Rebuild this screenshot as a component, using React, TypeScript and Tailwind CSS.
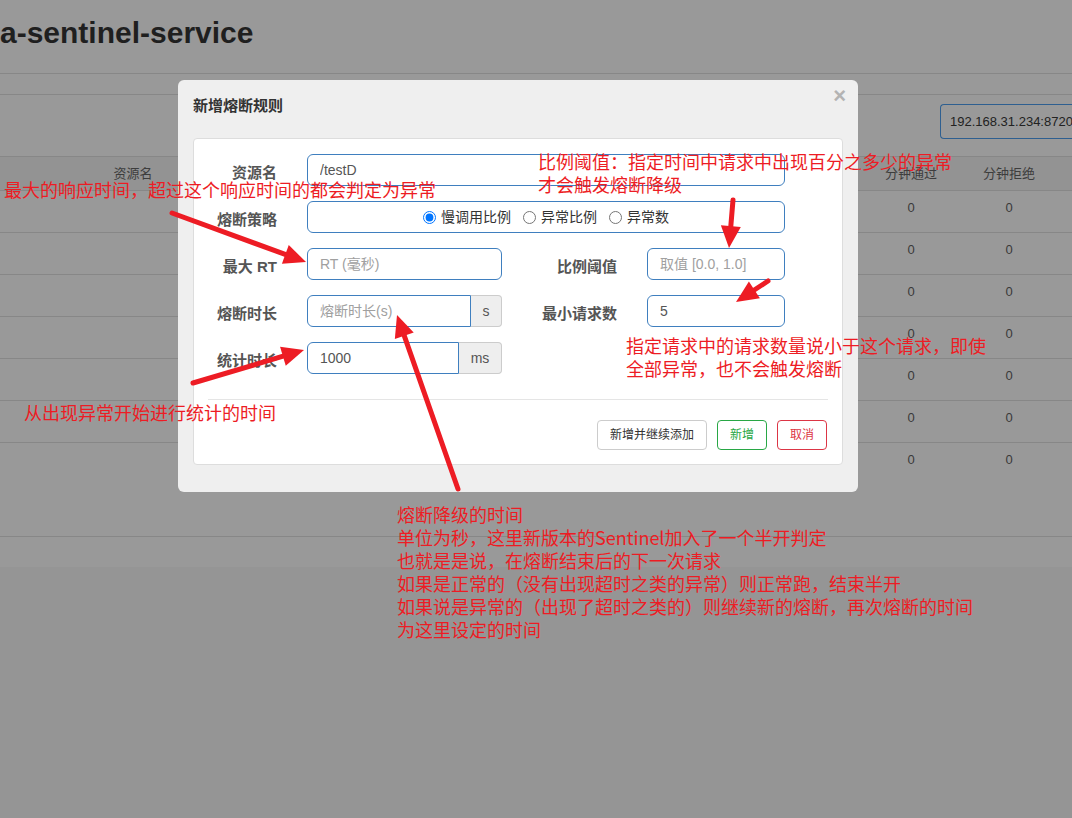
import React from "react";

const rows = [0, 1, 2, 3, 4, 5, 6];

interface IArrow {
    x1: number,
    y1: number,
    x2: number,
    y2: number,
}

// red arrow drawn on top of the screenshot
const Arrow = ({ x1, y1, x2, y2 }: IArrow) => {
    const dx = x2 - x1;
    const dy = y2 - y1;
    const len = Math.sqrt(dx * dx + dy * dy);
    const ux = dx / len;
    const uy = dy / len;
    const bx = x2 - ux * 22;
    const by = y2 - uy * 22;
    const px = -uy;
    const py = ux;
    const head = `${x2},${y2} ${bx + px * 10},${by + py * 10} ${bx - px * 10},${by - py * 10}`;
    return (
        <g>
            <line x1={x1} y1={y1} x2={bx + ux * 2} y2={by + uy * 2} stroke="#ed1c24" strokeWidth={5} strokeLinecap="round" />
            <polygon points={head} fill="#ed1c24" />
        </g>
    );
};

const Label = ({ text, w }: { text: string, w: string }) => (
    <div className={`${w} mt-[5px] shrink-0 text-right text-[15px] font-bold leading-[20px] text-[#555]`}>{text}</div>
);

const App = () => {
    return (
        <div className="relative h-[818px] w-full overflow-hidden bg-[#959595] font-['Liberation_Sans','Noto_Sans_CJK_SC',sans-serif]">
            {/* page behind the backdrop */}
            <div className="bg-[#999999]">
                <div className="h-[74px] border-b border-[#878787]">
                    <h1 className="pt-[15px] text-[30px] font-bold leading-[36px] text-[#1f1f1f]">a-sentinel-service</h1>
                </div>
                <div className="h-[21px] border-b border-[#878787]" />
                <div className="flex h-[62px] justify-end border-b border-[#878787] pt-[9px]">
                    <div className="flex h-[35px] w-[132px] shrink-0 items-center overflow-hidden whitespace-nowrap rounded-l-[4px] border border-r-0 border-[#2e5f90] pl-[9px] text-[13px] text-[#222]">
                        192.168.31.234:8720
                    </div>
                </div>
                <div className="flex h-[34px] items-center border-b border-[#878787] bg-[#939393] text-[13px] text-[#3d3d3d]">
                    <div className="w-[266px] text-center">资源名</div>
                    <div className="flex-1" />
                    <div className="w-[98px] text-center">分钟通过</div>
                    <div className="w-[98px] text-center">分钟拒绝</div>
                    <div className="w-[14px]" />
                </div>
                {rows.map((r) => (
                    <div key={r} className={`flex h-[42px] items-center pb-[8px] text-[13px] text-[#3a3a3a] ${r < 6 ? "border-b border-[#878787]" : ""}`}>
                        <div className="w-[266px]" />
                        <div className="flex-1" />
                        <div className="w-[98px] text-center">0</div>
                        <div className="w-[98px] text-center">0</div>
                        <div className="w-[14px]" />
                    </div>
                ))}
                <div className="h-[52px] border-b border-[#878787]" />
                <div className="h-[30px]" />
            </div>

            {/* modal */}
            <div className="absolute left-[178px] top-[80px] h-[412px] w-[680px] rounded-[6px] bg-[#efefef] px-[15px]">
                <div className="flex h-[52px] items-start justify-between">
                    <div className="mt-[16px] text-[15px] font-bold leading-[20px] text-[#333]">新增熔断规则</div>
                    <div className="-mr-[3px] mt-[5px] text-[22px] font-bold leading-[22px] text-[#b3b3b3]">×</div>
                </div>
                <div className="mt-[6px] h-[327px] rounded-[4px] border border-[#dddddd] bg-white pt-[15px]">
                    <div className="flex flex-col gap-[15px]">
                        <div className="flex items-center">
                            <Label text="资源名" w="w-[83px]" />
                            <input readOnly value="/testD" className="ml-[30px] h-[32px] w-[478px] rounded-[6px] border border-[#3f7fbf] px-[12px] text-[14px] text-[#555] outline-none" />
                        </div>
                        <div className="flex items-center">
                            <Label text="熔断策略" w="w-[83px]" />
                            <div className="ml-[30px] flex h-[32px] w-[478px] items-center justify-center gap-[12px] rounded-[6px] border border-[#3f7fbf] text-[14px] text-[#333]">
                                <label className="flex items-center gap-[5px]">
                                    <input type="radio" name="grade" defaultChecked className="m-0 h-[13px] w-[13px]" />
                                    慢调用比例
                                </label>
                                <label className="flex items-center gap-[5px]">
                                    <input type="radio" name="grade" className="m-0 h-[13px] w-[13px]" />
                                    异常比例
                                </label>
                                <label className="flex items-center gap-[5px]">
                                    <input type="radio" name="grade" className="m-0 h-[13px] w-[13px]" />
                                    异常数
                                </label>
                            </div>
                        </div>
                        <div className="flex items-center">
                            <Label text="最大 RT" w="w-[83px]" />
                            <input readOnly placeholder="RT (毫秒)" className="ml-[30px] h-[32px] w-[195px] rounded-[6px] border border-[#3f7fbf] px-[12px] text-[14px] text-[#555] outline-none placeholder:text-[#a0a0a0]" />
                            <Label text="比例阈值" w="w-[115px]" />
                            <input readOnly placeholder="取值 [0.0, 1.0]" className="ml-[30px] h-[32px] w-[138px] rounded-[6px] border border-[#3f7fbf] px-[12px] text-[14px] text-[#555] outline-none placeholder:text-[#a0a0a0]" />
                        </div>
                        <div className="flex items-center">
                            <Label text="熔断时长" w="w-[83px]" />
                            <div className="ml-[30px] flex h-[32px] w-[195px]">
                                <input readOnly placeholder="熔断时长(s)" className="h-full min-w-0 flex-1 rounded-l-[6px] border border-[#3f7fbf] px-[12px] text-[14px] text-[#555] outline-none placeholder:text-[#a0a0a0]" />
                                <div className="flex w-[31px] items-center justify-center rounded-r-[4px] border border-l-0 border-[#cccccc] bg-[#eeeeee] text-[14px] text-[#555]">s</div>
                            </div>
                            <Label text="最小请求数" w="w-[115px]" />
                            <input readOnly value="5" className="ml-[30px] h-[32px] w-[138px] rounded-[6px] border border-[#3f7fbf] px-[12px] text-[14px] text-[#555] outline-none" />
                        </div>
                        <div className="flex items-center">
                            <Label text="统计时长" w="w-[83px]" />
                            <div className="ml-[30px] flex h-[32px] w-[195px]">
                                <input readOnly value="1000" className="h-full min-w-0 flex-1 rounded-l-[6px] border border-[#3f7fbf] px-[12px] text-[14px] text-[#555] outline-none" />
                                <div className="flex w-[43px] items-center justify-center rounded-r-[4px] border border-l-0 border-[#cccccc] bg-[#eeeeee] text-[14px] text-[#555]">ms</div>
                            </div>
                        </div>
                    </div>
                    <div className="mx-[14px] mt-[25px] border-t border-[#e5e5e5]" />
                    <div className="mt-[20px] flex justify-end gap-[10px] pr-[15px] text-[12px]">
                        <button className="h-[30px] rounded-[4px] border border-[#cccccc] bg-white px-[12px] text-[#333]">新增并继续添加</button>
                        <button className="h-[30px] rounded-[4px] border border-[#28a745] bg-white px-[12px] text-[#28a745]">新增</button>
                        <button className="h-[30px] rounded-[4px] border border-[#dc3545] bg-white px-[12px] text-[#dc3545]">取消</button>
                    </div>
                </div>
            </div>

            {/* red annotations */}
            <svg className="pointer-events-none absolute left-0 top-0" width={1072} height={818}>
                <Arrow x1={172} y1={213} x2={306} y2={262} />
                <Arrow x1={733} y1={200} x2={729} y2={248} />
                <Arrow x1={768} y1={281} x2={736} y2={302} />
                <Arrow x1={193} y1={383} x2={304} y2={350} />
                <Arrow x1={458} y1={489} x2={397} y2={315} />
            </svg>
            <div className="pointer-events-none absolute inset-0 font-['Noto_Sans_CJK_SC',sans-serif] text-[18px] leading-[23px] text-[#ed1c24]">
                <div className="absolute left-[4px] top-[178px] whitespace-nowrap">最大的响应时间，超过这个响应时间的都会判定为异常</div>
                <div className="absolute left-[538px] top-[150px] whitespace-nowrap">
                    <div>比例阈值：指定时间中请求中出现百分之多少的异常</div>
                    <div>才会触发熔断降级</div>
                </div>
                <div className="absolute left-[626px] top-[334px] whitespace-nowrap">
                    <div>指定请求中的请求数量说小于这个请求，即使</div>
                    <div>全部异常，也不会触发熔断</div>
                </div>
                <div className="absolute left-[24px] top-[401px] whitespace-nowrap">从出现异常开始进行统计的时间</div>
                <div className="absolute left-[397px] top-[503px] whitespace-nowrap">
                    <div>熔断降级的时间</div>
                    <div>单位为秒，这里新版本的Sentinel加入了一个半开判定</div>
                    <div>也就是是说，在熔断结束后的下一次请求</div>
                    <div>如果是正常的（没有出现超时之类的异常）则正常跑，结束半开</div>
                    <div>如果说是异常的（出现了超时之类的）则继续新的熔断，再次熔断的时间</div>
                    <div>为这里设定的时间</div>
                </div>
            </div>
        </div>
    );
};

export default App;
